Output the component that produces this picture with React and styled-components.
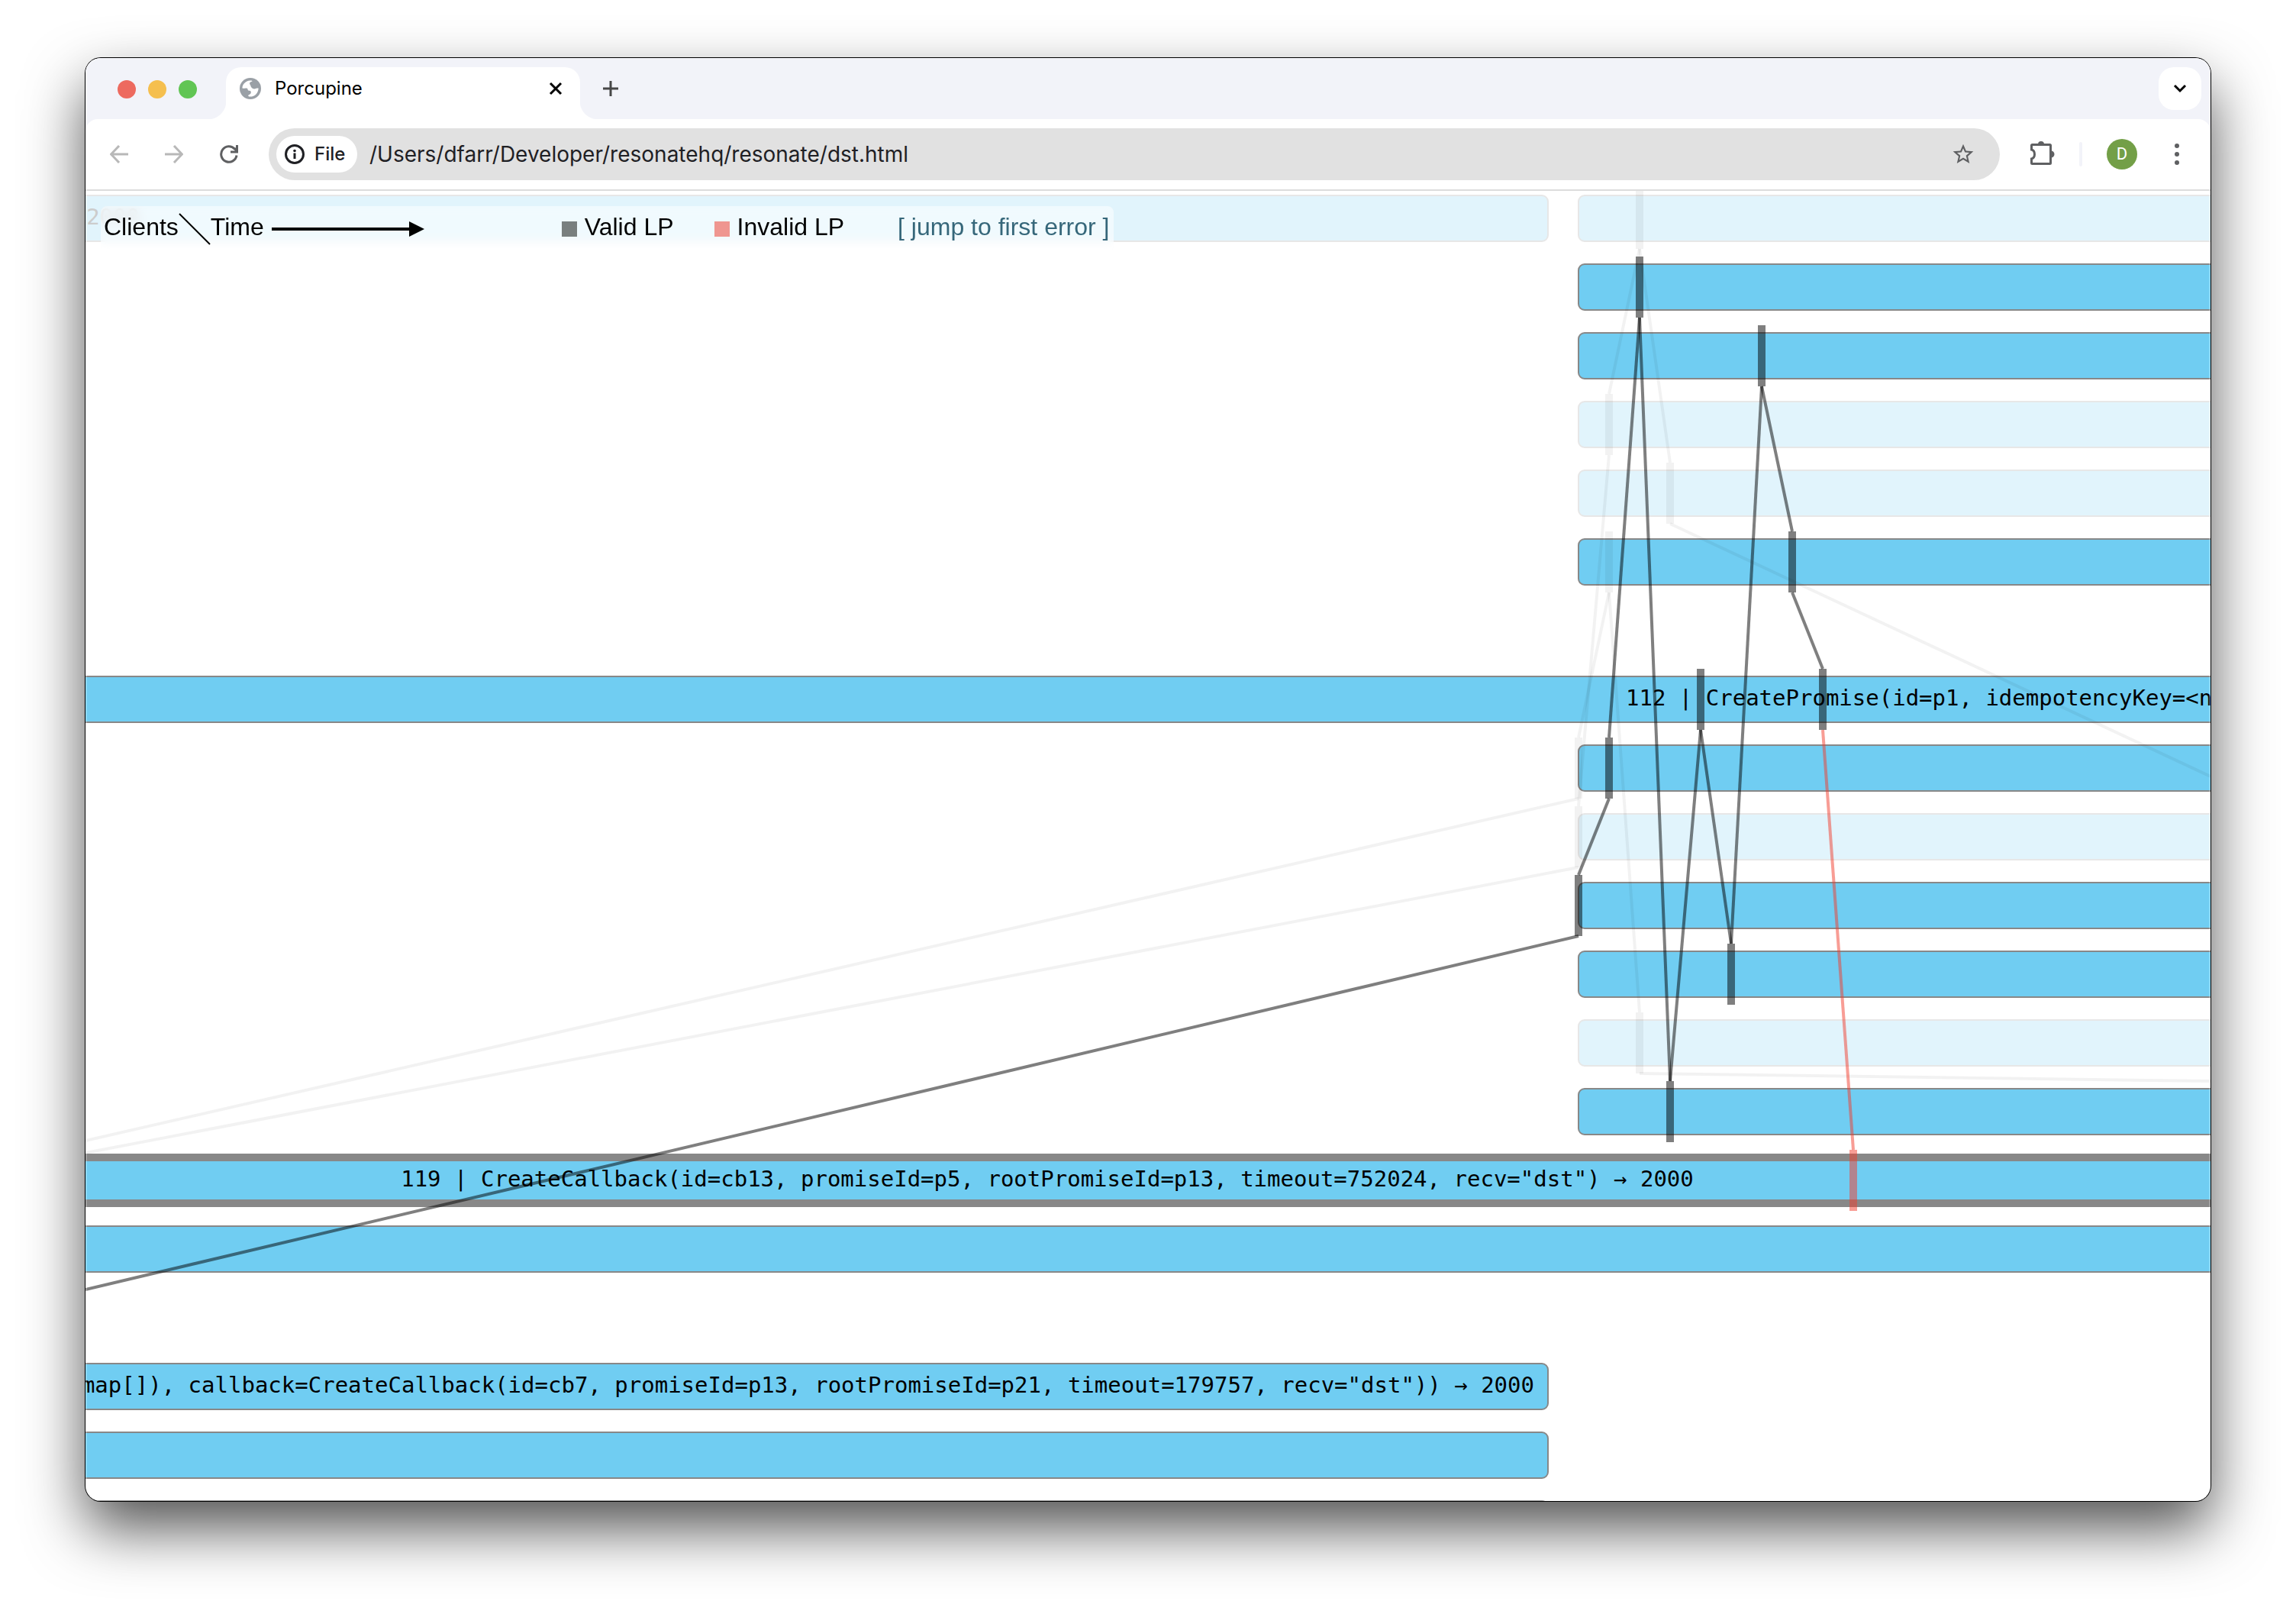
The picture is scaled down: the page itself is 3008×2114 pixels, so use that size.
import React from 'react';
import styled, { createGlobalStyle } from 'styled-components';

const GlobalStyle = createGlobalStyle`
  *, *::before, *::after { box-sizing: border-box; }
  body { margin: 0; background: #fff; }
`;

const UI_FONT = 'Inter, Roboto, "Liberation Sans", sans-serif';

const Desktop = styled.div`
  display: flex;
  min-height: 100vh;
  padding: 76px 112px 148px;
  background: #fff;
  overflow: hidden;
`;

const Window = styled.main`
  position: relative;
  display: flex;
  flex-direction: column;
  flex: 1;
  min-width: 0;
  border-radius: 20px;
  overflow: hidden;
  background: #fff;
  font-family: ${UI_FONT};
  box-shadow: 0 0 0 1px #000, 0 36px 78px rgba(0, 0, 0, 0.68);

  &::after {
    content: '';
    position: absolute;
    inset: 0;
    border-radius: 20px;
    box-shadow: inset 0 0 0 2px rgba(255, 255, 255, 0.2);
    pointer-events: none;
  }
`;

const TabStrip = styled.header`
  display: flex;
  height: 80px;
  padding: 12px 12px 0 42px;
  background: #f2f3f9;
`;

const TrafficLights = styled.div`
  display: flex;
  gap: 16px;
  align-items: center;
  height: 58px;
  margin-right: 38px;
`;

const Light = styled.button`
  width: 24px;
  height: 24px;
  padding: 0;
  border: 0;
  border-radius: 50%;
  background: ${(p) => p.$color};
`;

const Tab = styled.div`
  position: relative;
  display: flex;
  align-items: center;
  width: 464px;
  height: 68px;
  padding: 0 20px 12px 18px;
  border-radius: 20px 20px 0 0;
  background: #fff;

  &::before, &::after {
    content: '';
    position: absolute;
    bottom: 0;
    width: 24px;
    height: 24px;
  }
  &::before {
    left: -24px;
    background: radial-gradient(circle at 0 0, transparent 24px, #fff 25px);
  }
  &::after {
    right: -24px;
    background: radial-gradient(circle at 100% 0, transparent 24px, #fff 25px);
  }
`;

const TabTitle = styled.span`
  flex: 1;
  margin-left: 18px;
  font-size: 24px;
  line-height: 32px;
  color: #000;
`;

const IconButton = styled.button`
  display: flex;
  align-items: center;
  justify-content: center;
  width: ${(p) => p.$size || 24}px;
  height: ${(p) => p.$size || 24}px;
  padding: 0;
  border: 0;
  background: none;
  color: ${(p) => p.$color || '#5f6062'};
`;

const NewTabButton = styled(IconButton)`
  margin: 16px 0 0 28px;
`;

const TabSearchButton = styled(IconButton)`
  margin-left: auto;
  border-radius: 20px;
  background: #fff;
`;

const ToolbarBack = styled.div`
  background: #f2f3f9;
`;

const Toolbar = styled.nav`
  display: flex;
  align-items: center;
  height: 94px;
  padding: 0 32px;
  border-bottom: 2px solid #dcdcdc;
  border-radius: 16px 16px 0 0;
  background: #fff;
`;

const NavButtons = styled.div`
  display: flex;
  gap: 48px;
  margin-right: 40px;
`;

const AddressBar = styled.div`
  display: flex;
  align-items: center;
  flex: 1;
  height: 68px;
  padding: 0 32px 0 10px;
  border-radius: 34px;
  background: #e1e1e1;
`;

const Chip = styled.button`
  display: flex;
  align-items: center;
  gap: 12px;
  width: 106px;
  height: 48px;
  padding: 0 0 0 10px;
  border: 0;
  border-radius: 24px;
  background: #fff;
  color: #1f2024;
  font-family: ${UI_FONT};
  font-size: 24px;
  font-weight: 500;
  line-height: 32px;
`;

const UrlInput = styled.input`
  flex: 1;
  min-width: 0;
  height: 48px;
  margin-left: 16px;
  padding: 0;
  border: 0;
  outline: 0;
  background: none;
  color: #1f2024;
  font-family: ${UI_FONT};
  font-size: 28px;
`;

const Actions = styled.div`
  display: flex;
  align-items: center;
  margin-left: 36px;
`;

const Divider = styled.span`
  width: 4px;
  height: 32px;
  margin: 0 32px;
  border-radius: 2px;
  background: #f2f3f9;
`;

const Avatar = styled.button`
  width: 40px;
  height: 40px;
  margin-right: 40px;
  padding: 0;
  border: 0;
  border-radius: 50%;
  background: #739f47;
  color: #fff;
  font-family: Roboto, sans-serif;
  font-size: 22px;
  line-height: 40px;
`;

const Page = styled.section`
  position: relative;
  flex: 1;
  overflow: hidden;
`;

const Chart = styled.svg`
  position: absolute;
  inset: 0;
  width: 100%;
  height: 100%;
`;

const CallText = styled.text`
  fill: ${(p) => (p.$faint ? '#ccc' : '#000')};
  font-family: "DejaVu Sans Mono", monospace;
  font-size: 29px;
`;

const Legend = styled.div`
  position: absolute;
  top: 20px;
  left: 20px;
  display: flex;
  align-items: center;
  height: 60px;
  padding: 0 6px 0 4px;
  border-radius: 8px;
  background: rgba(255, 255, 255, 0.5);
  backdrop-filter: blur(6px);
  font-family: "Liberation Sans", Arial, sans-serif;
  font-size: 32px;
  line-height: 40px;
  color: #000;
  white-space: nowrap;
`;

const LegendItem = styled.span`
  display: flex;
  align-items: center;
  gap: 10px;
  margin-left: ${(p) => p.$gap}px;
`;

const LegendText = styled.span`
  padding-bottom: 6px;
`;

const Swatch = styled.span`
  width: 20px;
  height: 20px;
  background: ${(p) => p.$color};
`;

const JumpLink = styled.a`
  margin-left: 70px;
  padding-bottom: 6px;
  color: #36677a;
  text-decoration: none;
`;

const OP_START = 1956;
const OP_END = 1916;
const EDGE = 6000;
const ROW_PITCH = 90;
const ROW_HEIGHT = 60;
const rowTop = (row) => 6 + row * ROW_PITCH;

const operations = [
  { row: 0, side: 'left', faint: true },
  { row: 0, side: 'right', faint: true },
  { row: 1, side: 'right' },
  { row: 2, side: 'right' },
  { row: 3, side: 'right', faint: true },
  { row: 4, side: 'right', faint: true },
  { row: 5, side: 'right' },
  { row: 7, side: 'full' },
  { row: 8, side: 'right' },
  { row: 9, side: 'right', faint: true },
  { row: 10, side: 'right' },
  { row: 11, side: 'right' },
  { row: 12, side: 'right', faint: true },
  { row: 13, side: 'right' },
  { row: 14, side: 'full', selected: true },
  { row: 15, side: 'full' },
  { row: 17, side: 'left' },
  { row: 18, side: 'left' },
  { row: 19, side: 'left' },
];

const col = (n) => OP_START + 40 * n;
const top = (row) => rowTop(row) - 10;
const bottom = (row) => rowTop(row) + ROW_HEIGHT + 10;

const faintPoints = [[0, 2], [3, 1], [4, 3], [5, 1], [8, 0], [9, 0], [12, 2]];
const validPoints = [[10, 0], [8, 1], [1, 2], [13, 3], [7, 4], [11, 5], [2, 6], [5, 7], [7, 8]];
const invalidPoint = [14, 9];

// Joins two linearization points: bottom edge of the upper one to the top edge of the lower one.
const link = ([rowA, colA], [rowB, colB]) =>
  rowA < rowB
    ? [col(colA), bottom(rowA), col(colB), top(rowB)]
    : [col(colA), top(rowA), col(colB), bottom(rowB)];

const faintLines = [
  link([0, 2], [3, 1]),
  link([0, 2], [4, 3]),
  link([3, 1], [9, 0]),
  link([5, 1], [8, 0]),
  link([5, 1], [12, 2]),
  [col(3), bottom(4), 2784, 767],
  [col(2), bottom(12), 2784, 1166],
  [col(0), bottom(8), 0, 1244],
  [col(0), bottom(9), 0, 1260],
];

const validLines = [
  [0, 1439, col(0), bottom(10)],
  ...validPoints.slice(1).map((p, i) => link(validPoints[i], p)),
];

const invalidLine = link(validPoints[validPoints.length - 1], invalidPoint);

function Operation({ row, side, faint, selected }) {
  const x = side === 'right' ? OP_START : -EDGE;
  const end = side === 'left' ? OP_END : EDGE;
  return (
    <rect
      x={x}
      y={rowTop(row)}
      width={end - x}
      height={ROW_HEIGHT}
      rx="8"
      fill={faint ? '#e1f4fc' : '#70cdf2'}
      stroke={faint ? '#e7e7e7' : '#888'}
      strokeWidth={selected ? 10 : 2}
    />
  );
}

function Line({ points: [x1, y1, x2, y2], color, opacity }) {
  return <line x1={x1} y1={y1} x2={x2} y2={y2} stroke={color} strokeOpacity={opacity} strokeWidth="4" />;
}

function Point({ at: [row, c], color, opacity }) {
  return <rect x={col(c) - 5} y={top(row)} width="10" height="80" fill={color} fillOpacity={opacity} />;
}

function History() {
  return (
    <Chart role="img" aria-label="Operation history">
      {operations.map((op) => <Operation key={`${op.row}-${op.side}`} {...op} />)}
      <CallText $faint x="71" y="44" textAnchor="end">→ 2000</CallText>
      <CallText x="2018" y="674">112 | CreatePromise(id=p1, idempotencyKey=&lt;nil&gt;</CallText>
      <CallText x="1260" y="1304" textAnchor="middle">
        119 | CreateCallback(id=cb13, promiseId=p5, rootPromiseId=p13, timeout=752024, recv="dst") → 2000
      </CallText>
      <CallText x="1898" y="1574" textAnchor="end">
        =map[]), callback=CreateCallback(id=cb7, promiseId=p13, rootPromiseId=p21, timeout=179757, recv="dst")) → 2000
      </CallText>
      {faintLines.map((p, i) => <Line key={i} points={p} color="#000" opacity="0.05" />)}
      {faintPoints.map((p) => <Point key={p.join()} at={p} color="#000" opacity="0.05" />)}
      {validLines.map((p, i) => <Line key={i} points={p} color="#000" opacity="0.5" />)}
      <Line points={invalidLine} color="#f23b2b" opacity="0.5" />
      {validPoints.map((p) => <Point key={p.join()} at={p} color="#000" opacity="0.5" />)}
      <Point at={invalidPoint} color="#f23b2b" opacity="0.5" />
    </Chart>
  );
}

function GlobeIcon() {
  return (
    <svg width="28" height="28" viewBox="0 0 28 28">
      <circle cx="14" cy="14" r="14" fill="#9aa0a6" />
      <path
        fill="#fff"
        d="M13.400 3.600C15.400 3.400 16.800 3.800 16.400 4.600C13.400 5.200 12.400 7 13.400 8.400C14.800 10 14.400 11.200 15.400 12.600C16.800 14.600 19.600 14.800 21 14C22.200 13.400 23 13.400 24.600 13.400C24.600 19 20.400 24.600 13.600 24.600C11.400 24.600 11 24 11.400 22.600C13 21.600 14.600 21 14.800 19.200C15 17.400 13.800 16.800 12 16.800C10.200 16.800 11.200 14.400 9.200 13.600C7.400 13 5.400 14 3.400 13.600C3.600 8.400 8 3.800 13.400 3.600Z"
      />
    </svg>
  );
}

function CloseIcon() {
  return (
    <svg width="24" height="24" viewBox="0 0 24 24" fill="none" stroke="#000" strokeWidth="3">
      <path d="M5 5L19 19M19 5L5 19" />
    </svg>
  );
}

function PlusIcon() {
  return (
    <svg width="24" height="24" viewBox="0 0 24 24" fill="none" stroke="currentColor" strokeWidth="3">
      <path d="M12 2V22M2 12H22" />
    </svg>
  );
}

function ChevronIcon() {
  return (
    <svg width="24" height="24" viewBox="0 0 24 24" fill="none" stroke="#000" strokeWidth="3">
      <path d="M5 8L12 15L19 8" />
    </svg>
  );
}

function ArrowIcon({ flip }) {
  return (
    <svg width="24" height="24" viewBox="0 0 24 24" fill="none" stroke="currentColor" strokeWidth="3">
      <path d={flip ? 'M0 12H22M12 1L22.500 12L12 23' : 'M24 12H2M12 1L1.500 12L12 23'} />
    </svg>
  );
}

function ReloadIcon() {
  return (
    <svg width="24" height="24" viewBox="0 0 24 24">
      <path d="M22 13.500A10.200 10.200 0 1 1 19.500 5.200" fill="none" stroke="currentColor" strokeWidth="3" />
      <path d="M24 0V10.500H14V7.500H21V0Z" fill="currentColor" />
      <path d="M19 4L22 8" stroke="currentColor" strokeWidth="3" />
    </svg>
  );
}

function InfoIcon() {
  return (
    <svg width="28" height="28" viewBox="0 0 28 28">
      <circle cx="14" cy="14" r="11.500" fill="none" stroke="currentColor" strokeWidth="3" />
      <path d="M12.500 12.500H15.500V20H12.500Z" fill="currentColor" />
      <circle cx="14" cy="9.500" r="1.800" fill="currentColor" />
    </svg>
  );
}

function StarIcon() {
  return (
    <svg width="36" height="36" viewBox="0 0 24 24" fill="currentColor">
      <path d="M22 9.240l-7.190-.62L12 2 9.190 8.630 2 9.240l5.460 4.730L5.820 21 12 17.270 18.180 21l-1.630-7.030L22 9.240zM12 15.400l-3.760 2.270 1-4.280-3.320-2.880 4.380-.38L12 6.100l1.710 4.040 4.380.38-3.320 2.880 1 4.280L12 15.400z" />
    </svg>
  );
}

function PuzzleIcon() {
  return (
    <svg width="36" height="36" viewBox="0 0 36 36" fill="none">
      <path
        d="M5.500 6.500Q5.500 5.500 6.500 5.500H29.500Q30.500 5.500 30.500 6.500V29.500Q30.500 30.500 29.500 30.500H6.500Q5.500 30.500 5.500 29.500V24C8 23.300 9.500 20.500 9.500 18C9.500 15.500 8 12.700 5.500 12Z"
        stroke="currentColor"
        strokeWidth="3"
      />
      <path d="M14 5A4 4 0 0 1 22 5ZM31 13.500A4.500 4.500 0 0 1 31 22.500Z" fill="currentColor" />
    </svg>
  );
}

function MenuIcon() {
  return (
    <svg width="24" height="32" viewBox="0 0 24 32" fill="currentColor">
      <circle cx="12" cy="5" r="3" />
      <circle cx="12" cy="16" r="3" />
      <circle cx="12" cy="27" r="3" />
    </svg>
  );
}

function SlashMark() {
  return (
    <svg width="42" height="42" viewBox="0 0 42 42">
      <path d="M1 1L41 41" stroke="#000" strokeWidth="2" />
    </svg>
  );
}

const TimeArrowSvg = styled.svg`
  margin-left: 10px;
`;

function TimeArrow() {
  return (
    <TimeArrowSvg width="200" height="20" viewBox="0 0 200 20">
      <path d="M0 10H182" stroke="#000" strokeWidth="4" />
      <path d="M180 0L200 10L180 20Z" />
    </TimeArrowSvg>
  );
}

export default function App() {
  return (
    <>
      <GlobalStyle />
      <Desktop>
        <Window>
          <TabStrip>
            <TrafficLights>
              <Light $color="#ed6a5f" aria-label="Close window" />
              <Light $color="#f5bf4f" aria-label="Minimize window" />
              <Light $color="#61c554" aria-label="Zoom window" />
            </TrafficLights>
            <Tab>
              <GlobeIcon />
              <TabTitle>Porcupine</TabTitle>
              <IconButton aria-label="Close tab"><CloseIcon /></IconButton>
            </Tab>
            <NewTabButton aria-label="New tab" $color="#474747"><PlusIcon /></NewTabButton>
            <TabSearchButton aria-label="Search tabs" $size={56}><ChevronIcon /></TabSearchButton>
          </TabStrip>
          <ToolbarBack>
            <Toolbar>
              <NavButtons>
                <IconButton aria-label="Back" $color="#b8b8b8"><ArrowIcon /></IconButton>
                <IconButton aria-label="Forward" $color="#b8b8b8"><ArrowIcon flip /></IconButton>
                <IconButton aria-label="Reload"><ReloadIcon /></IconButton>
              </NavButtons>
              <AddressBar>
                <Chip><InfoIcon />File</Chip>
                <UrlInput
                  aria-label="Address"
                  defaultValue="/Users/dfarr/Developer/resonatehq/resonate/dst.html"
                />
                <IconButton aria-label="Bookmark this page" $size={32}><StarIcon /></IconButton>
              </AddressBar>
              <Actions>
                <IconButton aria-label="Extensions" $size={36}><PuzzleIcon /></IconButton>
                <Divider />
                <Avatar aria-label="Profile">D</Avatar>
                <IconButton aria-label="Menu"><MenuIcon /></IconButton>
              </Actions>
            </Toolbar>
          </ToolbarBack>
          <Page>
            <History />
            <Legend>
              <LegendText>Clients</LegendText>
              <SlashMark />
              <LegendText>Time</LegendText>
              <TimeArrow />
              <LegendItem $gap={180}>
                <Swatch $color="#797f7e" />
                <LegendText>Valid LP</LegendText>
              </LegendItem>
              <LegendItem $gap={53}>
                <Swatch $color="#ef9690" />
                <LegendText>Invalid LP</LegendText>
              </LegendItem>
              <JumpLink href="#first-error">[ jump to first error ]</JumpLink>
            </Legend>
          </Page>
        </Window>
      </Desktop>
    </>
  );
}
